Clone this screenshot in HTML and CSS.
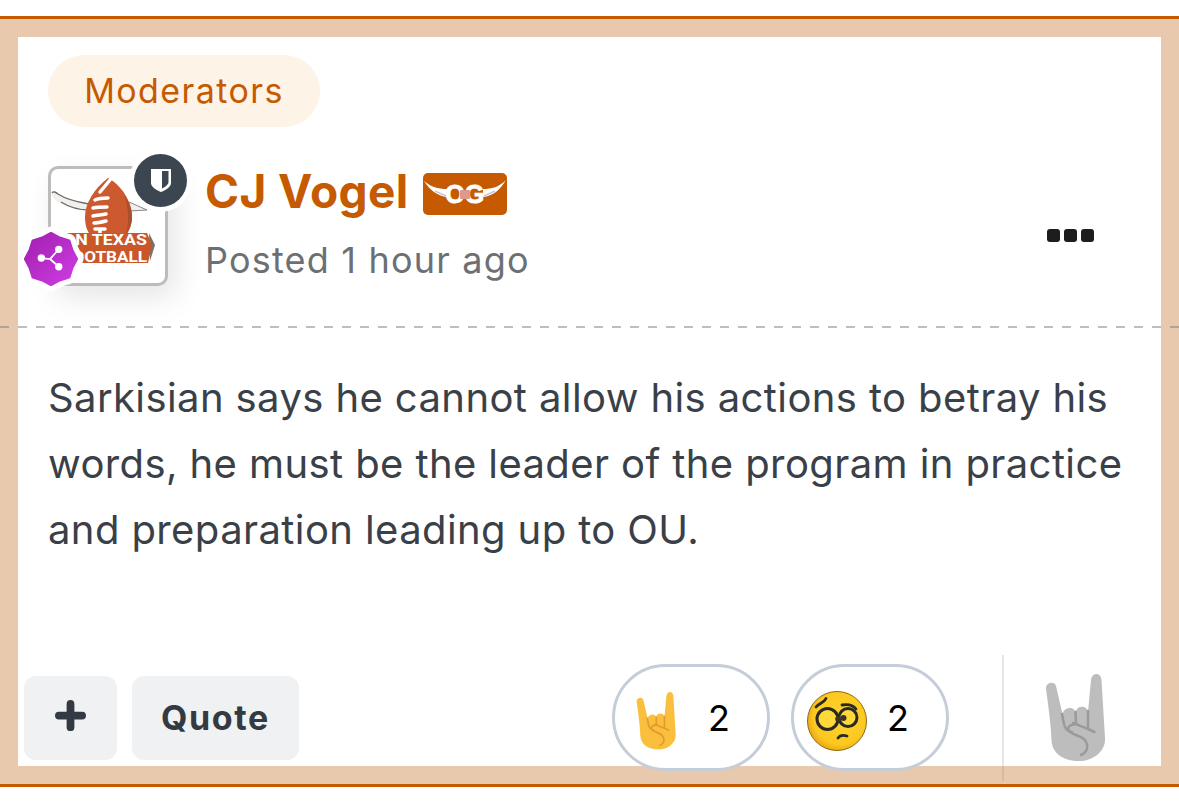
FILE: index.html
```html
<!DOCTYPE html>
<html lang="en">
<head>
<meta charset="utf-8">
<title>Post</title>
<link rel="stylesheet" href="styles.css">
</head>
<body>
<svg class="defs" width="0" height="0" aria-hidden="true">
  <symbol id="horns" viewBox="0 0 62 88">
    <path class="hand-fill" d="M1 15C0 9 9 6 11 12L17.5 40C19 33 29 32 30.5 38C32 31 42 31 43 38L46 6C47 -2 56 -2 56.5 6L60 64C61 77 48 87 34 87C19 87 7 80 6.5 66C6 50 3 30 1 15Z"/>
    <path class="hand-line" d="M17 40C19 50 19 57 27 58M30.5 38L31 50C24 51 21 53 25 58C30 62 40 62 42 70C43 76 41 79 36 81M43 37L43 55L28 49M43 55L49.500 58"/>
  </symbol>
</svg>
<main class="frame">
  <article class="card">
    <div class="chip">Moderators</div>
    <header class="author">
      <div class="avatar">
        <svg class="logo" viewBox="0 0 114 114" aria-hidden="true">
          <path d="M1 24C2 22 5 23 7 25C16 31 26 33 38 35L38 41C26 41 14 38 6 32C3 30 0 27 1 24Z" fill="#f2f0ee"/>
          <path d="M1 24C2 22 5 23 7 25C16 31 26 33 38 35M10 33C18 38 28 41 38 41" fill="none" stroke="#6f6a66" stroke-width="1.300"/>
          <path d="M78 33L96 41L78 42Z" fill="#f2f0ee" stroke="#8a8580" stroke-width="1"/>
          <path d="M57 9C43 20 34 34 34 48C34 58 37 64 41 68L74 68C78 62 81 56 81 48C81 32 70 16 57 9Z" fill="#cc5a2e"/>
          <path d="M73 26C79 34 81 41 81 48C81 54 79 60 75 66C78 54 78 38 73 26Z" fill="#a9502f"/>
          <path d="M49 23L59 11M44 31C48 29 53 29 57 29M42 39C47 38 51 38 56 38M42 47C46 46 51 46 55 45M43 54C47 54 51 53 55 52M44 60L54 60M49 60V68" stroke="#fff" stroke-width="3.500" fill="none" stroke-linecap="round"/>
          <path d="M98 64L104 76L99 92Z" fill="#77736f"/>
          <path d="M12 64H96L101 76L97 94H12Z" fill="#c9572a"/>
          <text class="logo-text" x="12" y="76" textLength="84" lengthAdjust="spacingAndGlyphs">ON TEXAS</text>
          <text class="logo-text" x="12" y="92.700" textLength="84" lengthAdjust="spacingAndGlyphs">FOOTBALL</text>
        </svg>
        <span class="badge-shield">
          <svg viewBox="0 0 20 24" aria-hidden="true">
            <path d="M0 1H20V15C20 19 15 22 10 24C5 22 0 19 0 15Z" fill="#fff"/>
            <path d="M11 3H17.500V14C17.500 16.500 14 19 11 20.500Z" fill="#3c4651"/>
          </svg>
        </span>
        <span class="badge-share">
          <svg viewBox="0 0 62 62" aria-hidden="true">
            <defs>
              <linearGradient id="purple" x1="0" y1="0" x2="1" y2="1">
                <stop offset="0" stop-color="#a01fae"/>
                <stop offset="1" stop-color="#d03de6"/>
              </linearGradient>
            </defs>
            <path class="star-halo" d="M31 4.500L40 9.300L49.700 12.300L52.700 22L57.500 31L52.700 40L49.700 49.700L40 52.700L31 57.500L22 52.700L12.300 49.700L9.300 40L4.500 31L9.300 22L12.300 12.300L22 9.300Z"/>
            <path class="star" d="M31 4.500L40 9.300L49.700 12.300L52.700 22L57.500 31L52.700 40L49.700 49.700L40 52.700L31 57.500L22 52.700L12.300 49.700L9.300 40L4.500 31L9.300 22L12.300 12.300L22 9.300Z"/>
            <path d="M21 30L30 31L39 21M30 31L39 39" stroke="#fff" stroke-width="1.800" fill="none"/>
            <circle cx="21" cy="30" r="3.800" fill="#fff"/>
            <circle cx="39" cy="21" r="3.800" fill="#fff"/>
            <circle cx="39" cy="39" r="3.800" fill="#fff"/>
          </svg>
        </span>
      </div>
      <div class="meta">
        <div class="name-row">
          <span class="name">CJ Vogel</span>
          <span class="og">
            <span class="og-text">OG</span>
            <svg class="og-horns" viewBox="0 0 84 42" aria-hidden="true">
              <path d="M1 8C8 14 15 16 24 16L24 24C14 23 7 17 1 8Z" fill="#fff"/>
              <path d="M83 7C76 14 69 16 60 16L60 24C70 23 77 17 83 7Z" fill="#fff"/>
              <path d="M12 18L23 23M72 18L61 23" stroke="#c9c9d6" stroke-width="1.500"/>
              <rect x="37" y="17" width="10" height="9" rx="1" fill="#dc9a8c"/>
            </svg>
          </span>
        </div>
        <div class="posted">Posted 1 hour ago</div>
      </div>
      <button class="more" type="button" aria-label="More"><i></i><i></i><i></i></button>
    </header>
    <div class="divider"></div>
    <p class="content">Sarkisian says he cannot allow his actions to betray his words, he must be the leader of the program in practice and preparation leading up to OU.</p>
    <footer class="actions">
      <button class="btn btn-plus" type="button" aria-label="Add">
        <svg viewBox="0 0 32 32" aria-hidden="true"><path d="M16 4V28M4 16H28" stroke="currentColor" stroke-width="8" stroke-linecap="round"/></svg>
      </button>
      <button class="btn btn-quote" type="button">Quote</button>
      <div class="reactions">
        <div class="pill">
          <svg class="pill-hand color-hand" aria-hidden="true"><use href="#horns"/></svg>
          <span class="count">2</span>
        </div>
        <div class="pill">
          <svg class="face" viewBox="0 0 60 60" aria-hidden="true">
            <defs>
              <radialGradient id="yellow" cx="0.55" cy="0.45" r="0.6">
                <stop offset="0" stop-color="#ffd52e"/>
                <stop offset="0.75" stop-color="#fbc81f"/>
                <stop offset="1" stop-color="#e49f12"/>
              </radialGradient>
            </defs>
            <circle cx="30" cy="30" r="29.500" fill="url(#yellow)" stroke="#8f6a10" stroke-width="1"/>
            <circle cx="20.500" cy="28" r="10.500" fill="#ffd83a" stroke="#2b2a22" stroke-width="3"/>
            <circle cx="41" cy="26.500" r="9" fill="#ffd83a" stroke="#2b2a22" stroke-width="3"/>
            <circle cx="31" cy="28" r="2.800" fill="#3a3524"/>
            <circle cx="36.500" cy="27" r="3" fill="#3a3524"/>
            <path d="M9 16C12 12 17 12 19 7.500M35 14C41 13 46 14 49 18M31 47C33 44 37 44 40 45" stroke="#2b2a22" stroke-width="2.800" fill="none" stroke-linecap="round"/>
          </svg>
          <span class="count">2</span>
        </div>
      </div>
      <span class="sep"></span>
      <svg class="grey-hand" aria-hidden="true"><use href="#horns"/></svg>
    </footer>
  </article>
</main>
</body>
</html>
```
FILE: styles.css
```css
* { box-sizing: border-box; }
html, body { margin: 0; padding: 0; background: #fff; }
body {
  padding-top: 16px;
  font-family: Inter, "Noto Sans", "Liberation Sans", sans-serif;
  color: #3a4048;
}
.defs { position: absolute; }
.frame {
  background: #e9c9ae;
  border-top: 3px solid #c55a00;
  border-bottom: 3px solid #c55a00;
  padding: 18px;
}
.card {
  background: #fff;
  height: 729px;
  padding: 18px 0 0 30px;
  display: flex;
  flex-direction: column;
}
.chip {
  align-self: flex-start;
  width: 272px;
  height: 72px;
  padding-bottom: 2px;
  border-radius: 36px;
  background: #fdf3e6;
  color: #c55a00;
  font-size: 34px;
  letter-spacing: 1.4px;
  display: flex;
  align-items: center;
  justify-content: center;
}
.author {
  display: flex;
  align-items: flex-start;
  margin-top: 39px;
  padding-right: 67px;
}
.avatar {
  position: relative;
  flex: none;
  width: 120px;
  height: 120px;
  border: 3px solid #bcbcbc;
  border-radius: 10px;
  background: #fff;
  box-shadow: 8px 12px 30px rgba(0, 0, 0, .1);
}
.logo { display: block; width: 114px; height: 114px; }
.logo-text {
  font-family: "Roboto", "Liberation Sans", sans-serif;
  font-weight: 700;
  font-size: 14px;
  fill: #fff;
}
.badge-shield {
  position: absolute;
  top: -15px;
  right: -22px;
  width: 53px;
  height: 53px;
  border-radius: 50%;
  background: #3c4651;
  box-shadow: 0 0 0 5px #fff;
  display: flex;
  align-items: center;
  justify-content: center;
}
.badge-shield svg { width: 20px; height: 24px; margin-top: -2px; }
.badge-share {
  position: absolute;
  left: -30px;
  top: 60px;
  width: 60px;
  height: 60px;
}
.badge-share svg { display: block; width: 100%; height: 100%; overflow: visible; }
.star-halo { fill: #fff; stroke: #fff; stroke-width: 14; stroke-linejoin: round; }
.star { fill: url(#purple); stroke: url(#purple); stroke-width: 3; stroke-linejoin: round; }
.meta { margin-left: 37px; }
.name-row { display: flex; align-items: center; height: 50px; }
.name { font-size: 46px; font-weight: 700; color: #c55a00; letter-spacing: .4px; }
.og {
  position: relative;
  width: 84px;
  height: 42px;
  margin-left: 14px;
  margin-top: 5px;
  border-radius: 5px;
  background: #c55a00;
  display: flex;
  align-items: center;
  justify-content: center;
}
.og-horns { position: absolute; inset: 0; width: 100%; height: 100%; }
.og-text {
  font-family: "Liberation Sans", sans-serif;
  font-weight: 700;
  font-size: 25px;
  line-height: 1;
  padding-top: 2px;
  color: #fff;
  -webkit-text-stroke: 1px #fff;
}
.posted { margin-top: 22px; font-size: 36px; color: #6c7075; letter-spacing: 1.2px; }
.more {
  margin: 63px 0 0 auto;
  padding: 0;
  border: 0;
  background: none;
  display: flex;
  gap: 4px;
}
.more i {
  display: block;
  width: 13px;
  height: 13px;
  border-radius: 3px;
  background: #1d1d1f;
}
.divider {
  flex: none;
  height: 2px;
  margin: 40px -18px 0 -48px;
  background: repeating-linear-gradient(90deg, rgba(125, 125, 125, .5) 0 9px, transparent 9px 18px);
}
.content {
  flex: 1;
  margin: 37px 30px 0 0;
  font-size: 40px;
  line-height: 66px;
  letter-spacing: .4px;
}
.actions {
  display: flex;
  align-items: center;
  height: 126px;
  margin: 0 54px -15px -24px;
}
.btn {
  height: 84px;
  border: 0;
  border-radius: 12px;
  background: #f0f1f3;
  color: #343a42;
  font-family: inherit;
  font-weight: 700;
  font-size: 34px;
  letter-spacing: 1.6px;
  padding: 0 0 2px;
}
.btn-plus { width: 93px; display: flex; align-items: center; justify-content: center; padding: 0 0 6px; }
.btn-plus svg { width: 31px; height: 31px; }
.btn-quote { width: 167px; margin-left: 15px; }
.reactions { display: flex; gap: 21px; margin-left: auto; margin-bottom: 1px; }
.pill {
  width: 158px;
  height: 107px;
  border: 3px solid #c5cdd9;
  border-radius: 54px;
  background: #fff;
  display: flex;
  align-items: center;
  padding-left: 21px;
}
.pill-hand { width: 41px; height: 60px; margin-top: 6px; }
.color-hand { --hand: #fbbf3e; --line: #e39b2c; }
.face { width: 60px; height: 60px; margin: 6px 0 0 -8px; }
.count { font-size: 36px; color: #000; margin-left: auto; margin-right: 37px; }
.sep {
  width: 2px;
  height: 126px;
  margin-left: 53px;
  background: rgba(120, 120, 120, .18);
}
.grey-hand { width: 62px; height: 88px; margin-left: 41px; --hand: #bdbdbd; --line: #9a9a9a; }
.hand-fill { fill: var(--hand); }
.hand-line { fill: none; stroke: var(--line); stroke-width: 2.5; stroke-linecap: round; }
```
